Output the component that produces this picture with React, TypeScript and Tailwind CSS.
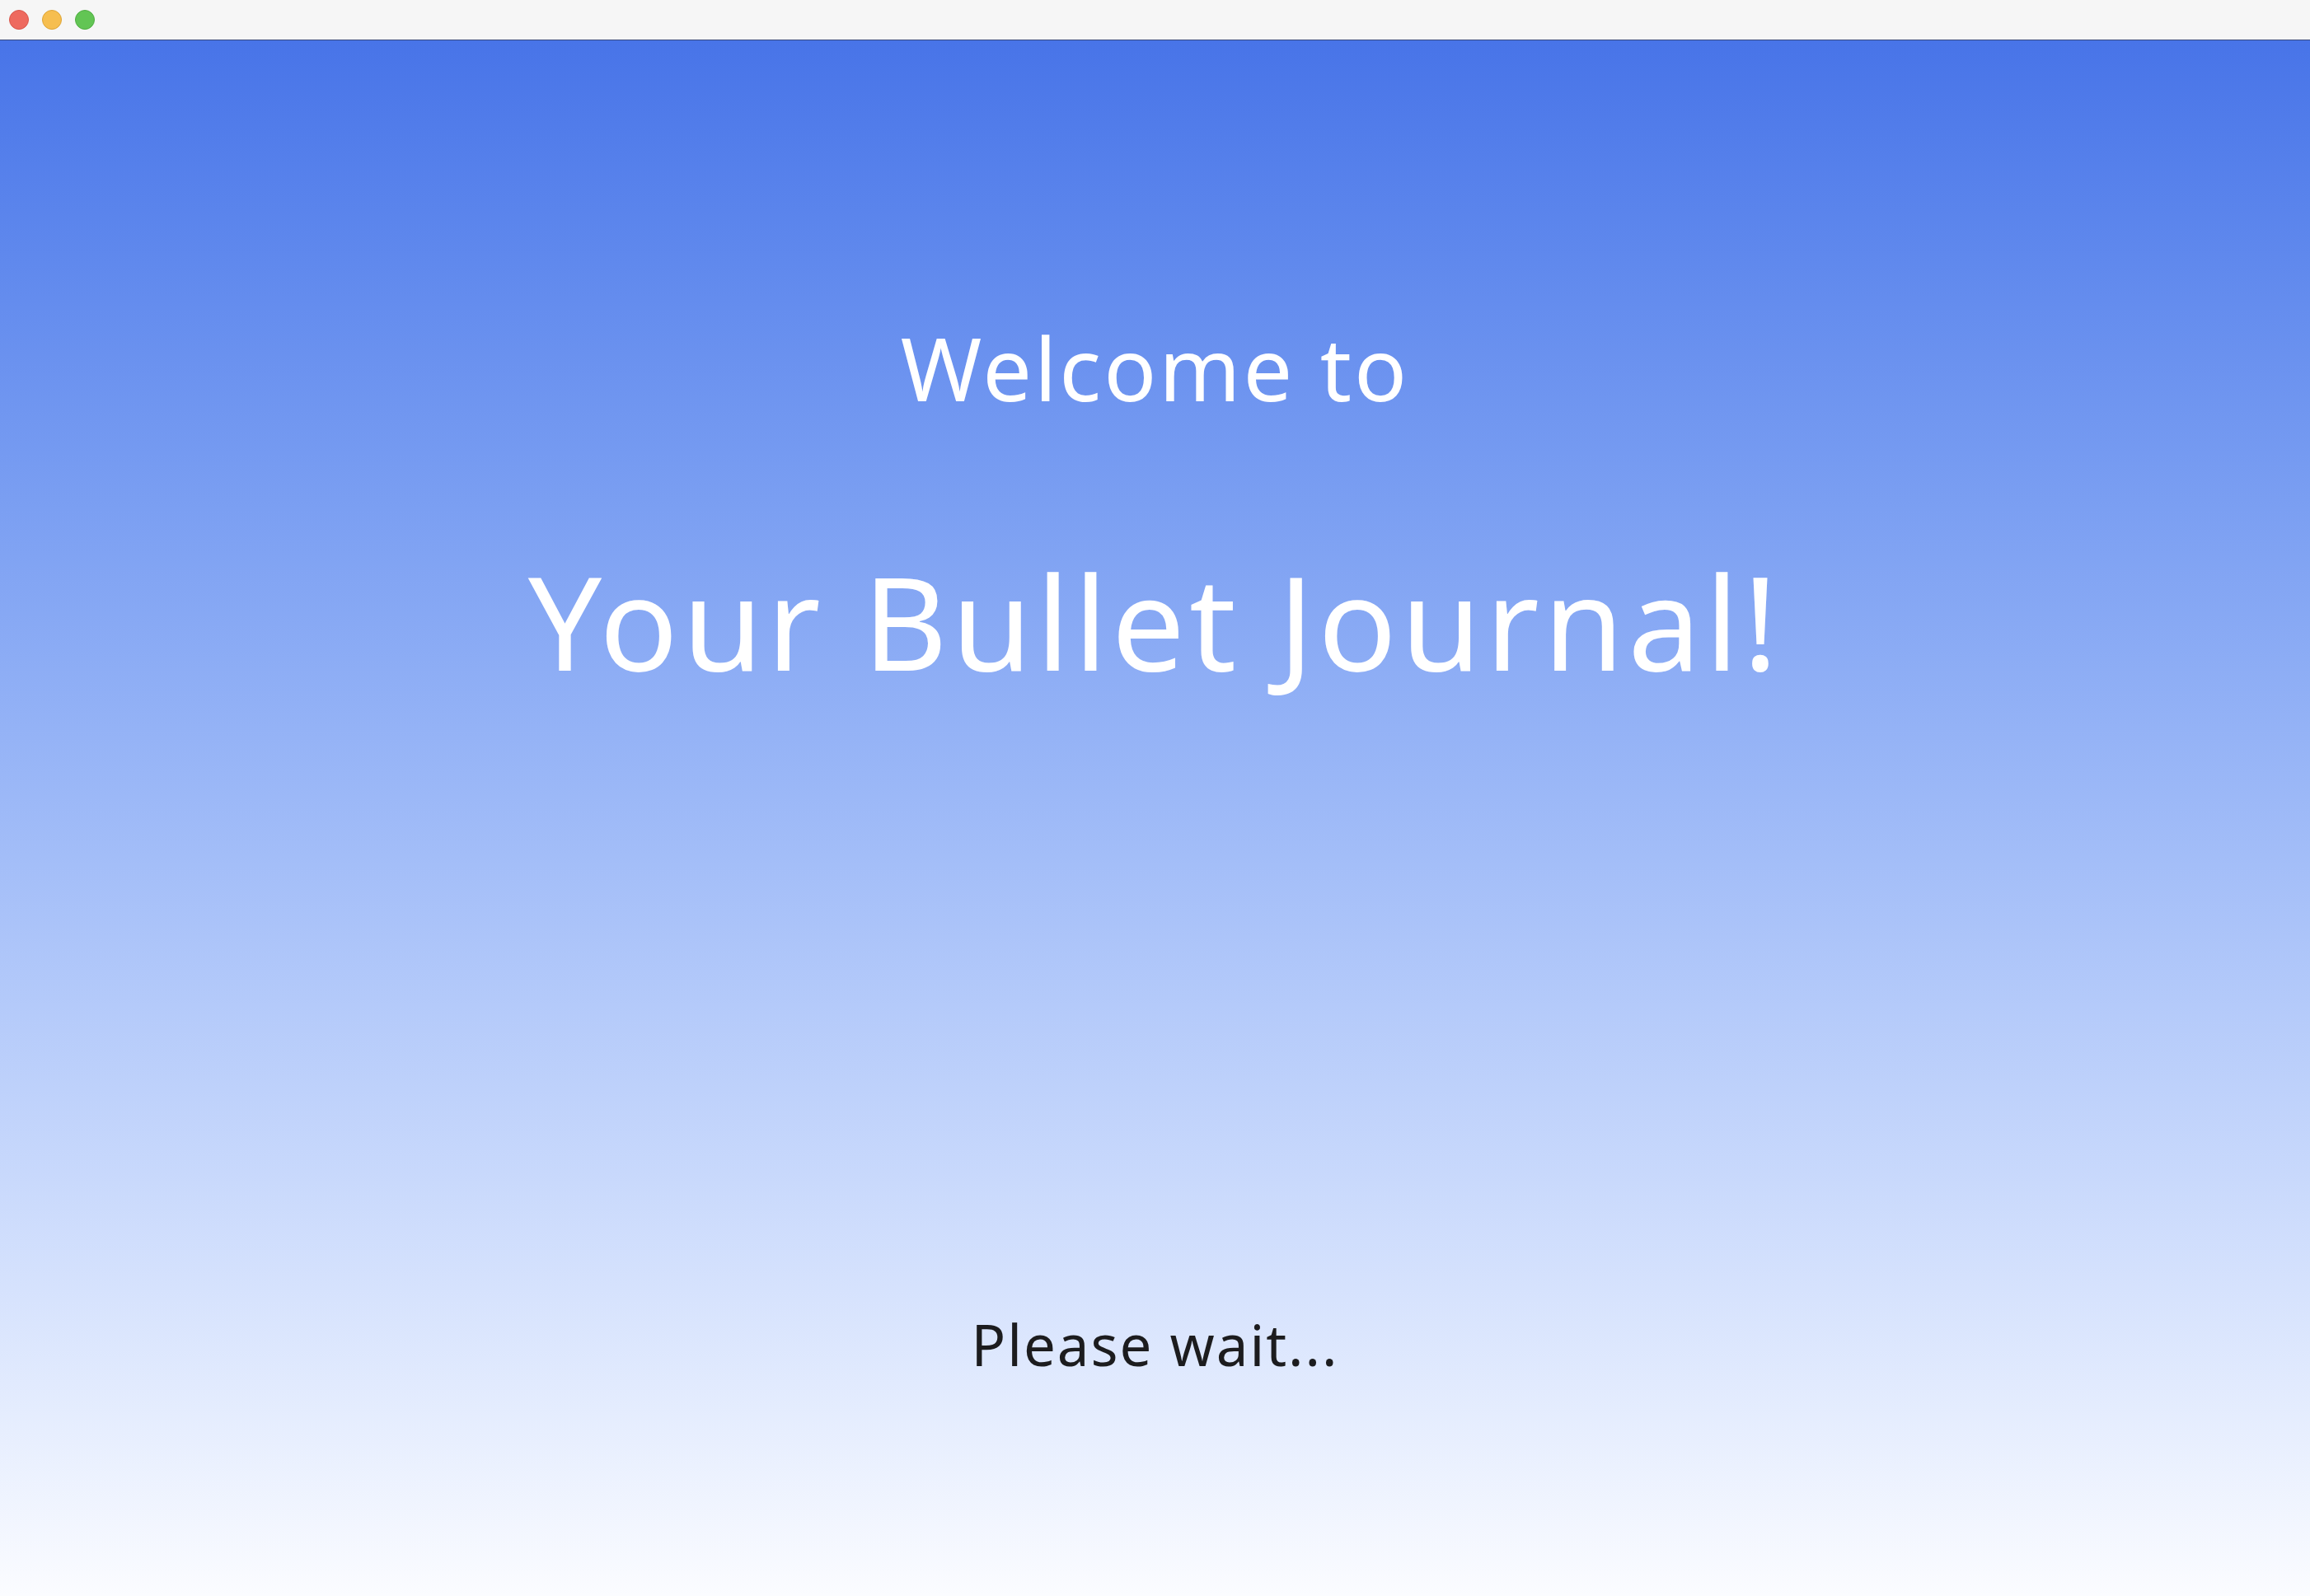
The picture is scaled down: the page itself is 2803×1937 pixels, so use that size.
export default function App() {
  return (
    <div className="flex h-[1937px] w-[2803px] flex-col overflow-hidden bg-white font-['Noto_Sans',_'DejaVu_Sans',_sans-serif]">
      {/* Window title bar */}
      <div className="flex h-[49px] shrink-0 items-center gap-[16px] border-b border-[#3a4a7a] bg-[#f6f6f6] px-[11px]">
        <span className="h-[24px] w-[24px] rounded-full border border-[#d9574c] bg-[#ee6a5f]" />
        <span className="h-[24px] w-[24px] rounded-full border border-[#dea536] bg-[#f6be4f]" />
        <span className="h-[24px] w-[24px] rounded-full border border-[#4fae42] bg-[#62c554]" />
      </div>

      {/* Splash content */}
      <div className="flex flex-1 flex-col items-center bg-gradient-to-b from-[#4874e8] to-[#fbfcff] pt-[344px]">
        <h2 className="text-[106px] leading-none tracking-[3px] text-white">Welcome to</h2>
        <h1 className="mt-[175px] text-[158px] leading-none tracking-[5px] text-white">
          Your Bullet Journal!
        </h1>
        <p className="mt-[765px] text-[69px] leading-none tracking-[2px] text-[#1c1c1e]">Please wait...</p>
      </div>
    </div>
  );
}
